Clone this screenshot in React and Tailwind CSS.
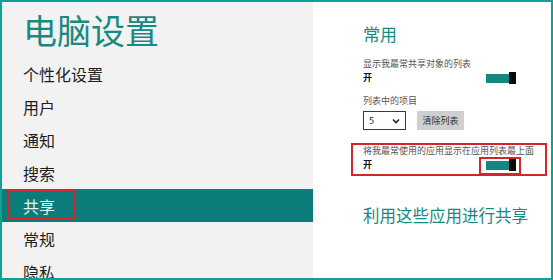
import React from "react";

const FONT = { fontFamily: '"Noto Sans CJK SC", "Noto Sans", sans-serif' };

const menu = ["个性化设置", "用户", "通知", "搜索", "共享", "常规", "隐私"];

function Toggle() {
  return (
    <div className="flex items-center h-[12px] w-[30px]">
      <div className="h-[9px] w-[23px] bg-[#14857f]" />
      <div className="h-[12px] w-[7px] bg-[#0a0a0a]" />
    </div>
  );
}

export default function App() {
  return (
    <div
      className="w-[553px] h-[280px] border-2 border-[#10a096] flex overflow-hidden bg-white"
      style={FONT}
    >
      {/* Left nav */}
      <div className="w-[311px] shrink-0 bg-[#f2f2f2] flex flex-col overflow-hidden">
        <div className="h-[55px] shrink-0 flex items-center pl-[21px] text-[34px] leading-none text-[#178a81]">
          电脑设置
        </div>
        {menu.map((item) => {
          const active = item === "共享";
          return (
            <div
              key={item}
              className={
                active
                  ? "relative h-[33px] shrink-0 flex items-center pl-[21px] text-[16px] leading-none bg-[#0a7d7a] text-[#e6f4f2]"
                  : "relative h-[33px] shrink-0 flex items-center pl-[21px] text-[16px] leading-none text-[#1e1e1e]"
              }
            >
              {item}
              {active && (
                <div className="absolute left-[6px] top-0 w-[67px] h-[30px] border-2 border-[#d3262c]" />
              )}
            </div>
          );
        })}
      </div>

      {/* Right content */}
      <div className="relative flex-1 pl-[50px] flex flex-col">
        <div className="mt-[22px] h-[20px] text-[17px] leading-[20px] text-[#178a81]">常用</div>
        <div className="mt-[14px] h-[12px] text-[9px] leading-[12px] text-[#555]">显示我最常共享对象的列表</div>
        <div className="mt-[2px] w-[153px] flex items-center justify-between">
          <span className="text-[9px] leading-[12px] font-bold text-[#111]">开</span>
          <Toggle />
        </div>
        <div className="mt-[11px] h-[12px] text-[9px] leading-[12px] text-[#555]">列表中的项目</div>
        <div className="mt-[4px] h-[19px] flex gap-[11px]">
          <div className="w-[43px] h-[19px] border border-[#3a3a3a] bg-white flex items-center justify-between px-[5px] text-[9px] text-[#222]">
            <span>5</span>
            <svg width="8" height="6" viewBox="0 0 8 6">
              <polyline points="1,1.5 4,4.5 7,1.5" fill="none" stroke="#222" strokeWidth="1.6" />
            </svg>
          </div>
          <div className="w-[47px] h-[19px] bg-[#cfcfcf] flex items-center justify-center text-[9px] text-[#333]">
            清除列表
          </div>
        </div>
        <div className="mt-[15px] h-[12px] text-[9px] leading-[12px] text-[#555]">将我最常使用的应用显示在应用列表最上面</div>
        <div className="mt-[2px] w-[153px] flex items-center justify-between">
          <span className="text-[9px] leading-[12px] font-bold text-[#111]">开</span>
          <Toggle />
        </div>
        <div className="mt-[34px] h-[20px] text-[16.5px] leading-[20px] text-[#178a81]">利用这些应用进行共享</div>

        {/* annotation boxes */}
        <div className="absolute left-[38px] top-[141px] w-[196px] h-[33px] border-2 border-[#d3262c]" />
        <div className="absolute left-[166px] top-[155px] w-[42px] h-[18px] border-2 border-[#d3262c]" />
      </div>
    </div>
  );
}
